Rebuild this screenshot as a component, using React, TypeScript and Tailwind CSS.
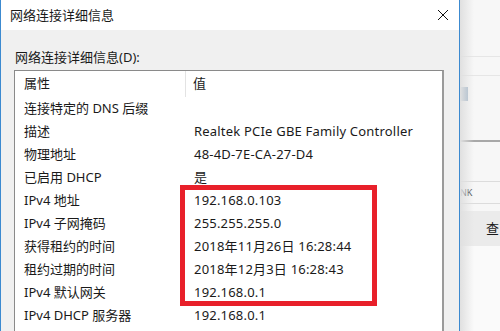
import React from "react";

const ROWS: [string, string][] = [
  ["连接特定的 DNS 后缀", ""],
  ["描述", "Realtek PCIe GBE Family Controller"],
  ["物理地址", "48-4D-7E-CA-27-D4"],
  ["已启用 DHCP", "是"],
  ["IPv4 地址", "192.168.0.103"],
  ["IPv4 子网掩码", "255.255.255.0"],
  ["获得租约的时间", "2018年11月26日 16:28:44"],
  ["租约过期的时间", "2018年12月3日 16:28:43"],
  ["IPv4 默认网关", "192.168.0.1"],
  ["IPv4 DHCP 服务器", "192.168.0.1"],
];

const FONT = {
  fontFamily: '"Noto Sans", "Noto Sans CJK SC", sans-serif',
};

export default function App() {
  return (
    <div className="relative flex h-[331px] w-[500px] overflow-hidden bg-white text-[13px] text-[#1a1a1a]" style={FONT}>
      {/* dialog */}
      <div className="flex w-[460px] shrink-0 flex-col border-x border-[#3c8ad0]">
        <div className="flex h-[30px] items-center justify-between bg-white pl-[9px] pr-[10px]">
          <span className="leading-none">网络连接详细信息</span>
          <svg width="12" height="12" viewBox="0 0 12 12">
            <path d="M1 1L11 11M11 1L1 11" stroke="#111" strokeWidth="1" />
          </svg>
        </div>
        <div className="flex flex-1 flex-col bg-[#f0f0f0] pl-[13px] pr-[15px]">
          <div className="flex h-[40px] items-center pt-[14px] pl-px leading-none">网络连接详细信息(D):</div>
          <div className="flex-1 border-l border-t border-r-2 border-[#8a8a8a] border-r-[#9a9a9a] bg-white">
            <div className="flex h-[26px] items-center">
              <div className="flex h-full w-[171px] items-center border-r border-[#e3e3e3] pl-[9px]">属性</div>
              <div className="pl-[7px]">值</div>
            </div>
            {ROWS.map(([k, v]) => (
              <div key={k} className="flex h-[23px] items-center whitespace-nowrap">
                <div className="w-[172px] pl-[9px]">{k}</div>
                <div className="pl-[7px] tracking-[0.2px]">{v}</div>
              </div>
            ))}
          </div>
        </div>
      </div>

      {/* window behind, to the right */}
      <div className="relative flex flex-1 flex-col bg-[#f7f7f7]">
        <div className="h-[56px]" />
        <div className="h-px bg-[#e6e6e6]" />
        <div className="h-[18px]" />
        <div className="h-px bg-[#e6e6e6]" />
        <div className="flex h-[36px] items-center">
          <div className="h-[14px] w-[8px] bg-[#9fb4c8]" />
        </div>
        <div className="h-[28px]" />
        <div className="h-[2px] bg-[#a8a8a8]" />
        <div className="h-[39px]" />
        <div className="h-px bg-[#dcdcdc]" />
        <div className="flex h-[21px] items-center text-[9px] leading-none text-[#333]">NK</div>
        <div className="h-px bg-[#dcdcdc]" />
        <div className="h-[7px]" />
        <div className="flex h-[35px] items-center justify-end bg-[#ebebeb] pr-px text-[13px]">查</div>
        <div className="flex-1 bg-[#fafafa]" />
        <div className="pointer-events-none absolute inset-y-0 left-0 w-[14px] bg-gradient-to-r from-[#e0e0e0] to-transparent" />
      </div>

      {/* red annotation box */}
      <div className="pointer-events-none absolute left-[180px] top-[185px] h-[121px] w-[197px] border-[5px] border-[#e8202a]" />
    </div>
  );
}
